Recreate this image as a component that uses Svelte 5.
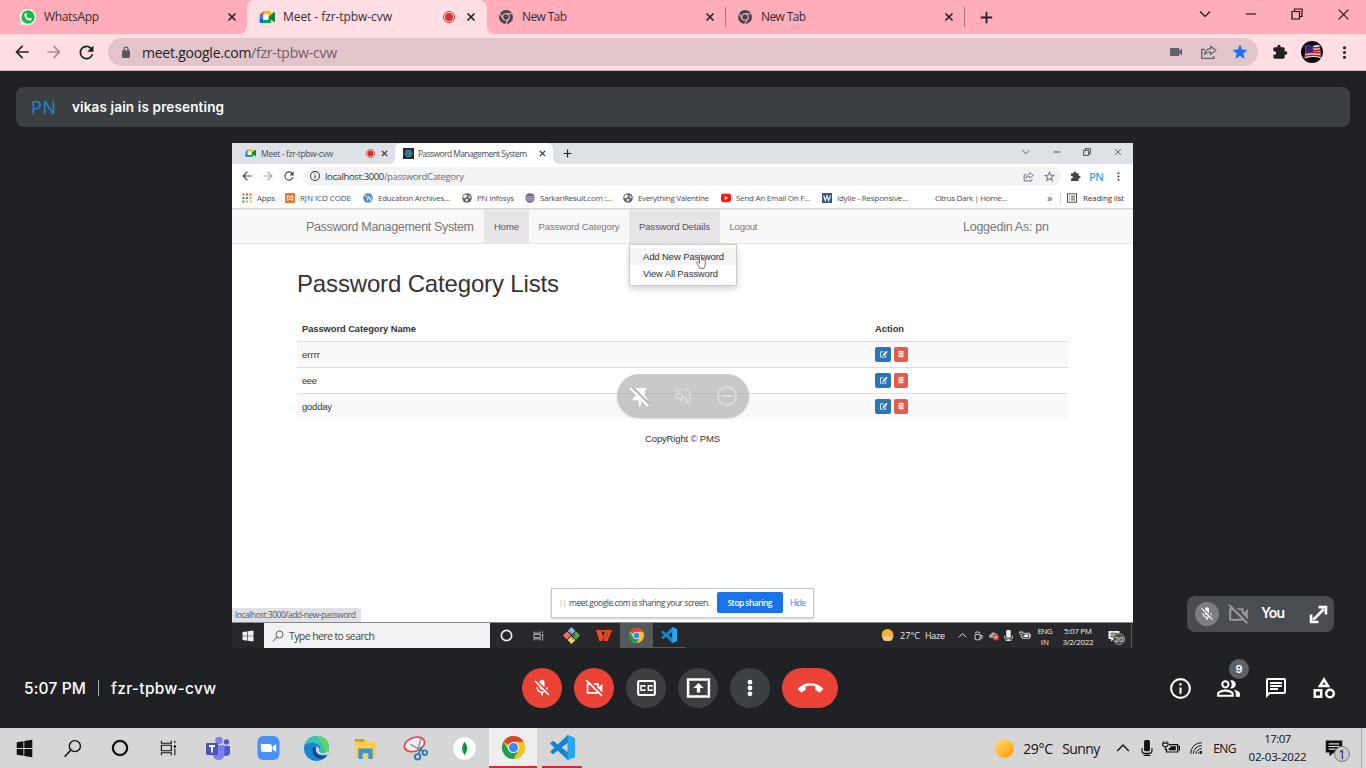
<script>
  const paths = {
    back: 'M20 11H7.83l5.59-5.59L12 4l-8 8 8 8 1.41-1.41L7.83 13H20v-2z',
    fwd: 'M12 4l-1.41 1.41L16.17 11H4v2h12.17l-5.58 5.59L12 20l8-8z',
    reload: 'M17.65 6.35A7.958 7.958 0 0012 4a8 8 0 100 16c3.73 0 6.84-2.55 7.73-6h-2.08A5.99 5.99 0 0112 18a6 6 0 110-12c1.66 0 3.14.69 4.22 1.78L13 11h7V4l-2.35 2.35z',
    star: 'M12 17.27L18.18 21l-1.64-7.03L22 9.24l-7.19-.61L12 2 9.19 8.63 2 9.24l5.46 4.73L5.82 21z',
    starOutline: 'M22 9.24l-7.19-.62L12 2 9.19 8.63 2 9.24l5.46 4.73L5.82 21 12 17.27 18.18 21l-1.63-7.03L22 9.24zM12 15.4l-3.76 2.27 1-4.28-3.32-2.88 4.38-.38L12 6.1l1.71 4.04 4.38.38-3.32 2.88 1 4.28L12 15.4z',
    lock: 'M18 8h-1V6A5 5 0 007 6v2H6a2 2 0 00-2 2v10a2 2 0 002 2h12a2 2 0 002-2V10a2 2 0 00-2-2zM9 6a3 3 0 016 0v2H9z',
    video: 'M17 10.5V7c0-.55-.45-1-1-1H4c-.55 0-1 .45-1 1v10c0 .55.45 1 1 1h12c.55 0 1-.45 1-1v-3.5l4 4v-11l-4 4z',
    puzzle: 'M20.5 11H19V7c0-1.1-.9-2-2-2h-4V3.5a2.5 2.5 0 00-5 0V5H4c-1.1 0-1.99.9-1.99 2v3.8H3.5c1.49 0 2.7 1.21 2.7 2.7s-1.21 2.7-2.7 2.7H2V20c0 1.1.9 2 2 2h13c1.1 0 2-.9 2-2v-4h1.5a2.5 2.5 0 000-5z',
    dots: 'M12 8a2 2 0 100-4 2 2 0 000 4zm0 2a2 2 0 100 4 2 2 0 000-4zm0 6a2 2 0 100 4 2 2 0 000-4z',
    bigDots: 'M12 8.300a2.600 2.600 0 100-5.200 2.600 2.600 0 000 5.200zm0 1.100a2.600 2.600 0 100 5.200 2.600 2.600 0 000-5.200zm0 6.300a2.600 2.600 0 100 5.200 2.600 2.600 0 000-5.200z',
    micOff: 'M19 11h-1.7c0 .74-.16 1.43-.43 2.05l1.23 1.23c.56-.98.9-2.09.9-3.28zm-4.02.17c0-.06.02-.11.02-.17V5c0-1.66-1.34-3-3-3S9 3.34 9 5v.18l5.98 5.99zM4.27 3L3 4.27l6.01 6.01V11c0 1.66 1.33 3 2.99 3 .22 0 .44-.03.65-.08l1.66 1.66c-.71.33-1.5.52-2.31.52-2.76 0-5.3-2.1-5.3-5.1H5c0 3.41 2.72 6.23 6 6.72V21h2v-3.28c.91-.13 1.77-.45 2.54-.9L19.73 21 21 19.73 4.27 3z',
    camOff: 'M9.56 8l-2-2-4.15-4.14L2 3.27 4.73 6H4c-.55 0-1 .45-1 1v10c0 .55.45 1 1 1h12c.21 0 .39-.08.55-.18L19.73 21l1.41-1.41-8.86-8.86L9.56 8zM5 16V8h1.73l8 8H5zm10-8v2.61l6 6V6.5l-4 4V7c0-.55-.45-1-1-1h-5.61l2 2H15z',
    callEnd: 'M12 9c-1.6 0-3.15.25-4.6.72v3.1c0 .39-.23.74-.56.9-.98.49-1.87 1.12-2.66 1.85-.18.18-.43.28-.7.28-.28 0-.53-.11-.71-.29L.29 13.08c-.18-.17-.29-.42-.29-.7 0-.28.11-.53.29-.71C3.34 8.78 7.46 7 12 7s8.66 1.78 11.71 4.67c.18.18.29.43.29.71 0 .28-.11.53-.29.71l-2.48 2.48c-.18.18-.43.29-.71.29-.27 0-.52-.11-.7-.28-.79-.74-1.69-1.36-2.67-1.85-.33-.16-.56-.5-.56-.9v-3.1C15.15 9.25 13.6 9 12 9z',
    cc: 'M19 4H5c-1.11 0-2 .9-2 2v12c0 1.1.89 2 2 2h14c1.1 0 2-.9 2-2V6c0-1.1-.9-2-2-2zm0 14H5V6h14v12zM7 15h3c.55 0 1-.45 1-1v-1H9.5v.5h-2v-3h2v.5H11v-1c0-.55-.45-1-1-1H7c-.55 0-1 .45-1 1v4c0 .55.45 1 1 1zm7 0h3c.55 0 1-.45 1-1v-1h-1.5v.5h-2v-3h2v.5H18v-1c0-.55-.45-1-1-1h-3c-.55 0-1 .45-1 1v4c0 .55.45 1 1 1z',
    info: 'M11 7h2v2h-2zm0 4h2v6h-2zm1-9a10 10 0 100 20 10 10 0 000-20zm0 18a8 8 0 110-16 8 8 0 010 16z',
    people: 'M16.67 13.13C18.04 14.06 19 15.32 19 17v3h4v-3c0-2.18-3.57-3.47-6.33-3.87z M15 12c2.21 0 4-1.79 4-4s-1.79-4-4-4c-.47 0-.91.1-1.33.24a5.98 5.98 0 010 7.52c.42.14.86.24 1.33.24z M9 12c2.21 0 4-1.79 4-4s-1.79-4-4-4-4 1.79-4 4 1.79 4 4 4zm0-6c1.1 0 2 .9 2 2s-.9 2-2 2-2-.9-2-2 .9-2 2-2z M9 13c-2.67 0-8 1.34-8 4v3h16v-3c0-2.66-5.33-4-8-4zm6 5H3v-.99C3.2 16.29 6.3 15 9 15s5.8 1.29 6 2v1z',
    chat: 'M4 4h16v12H5.17L4 17.17V4m0-2c-1.1 0-1.99.9-1.99 2L2 22l4-4h14c1.1 0 2-.9 2-2V4c0-1.1-.9-2-2-2H4zm2 10h8v2H6v-2zm0-3h12v2H6V9zm0-3h12v2H6V6z',
    volOff: 'M4.34 2.93L2.93 4.34 7.29 8.7 7 9H3v6h4l5 5v-6.59l4.18 4.18c-.65.49-1.38.88-2.18 1.11v2.06a8.94 8.94 0 003.61-1.75l2.05 2.05 1.41-1.41L4.34 2.93zM10 15.17L7.83 13H5v-2h2.83l.88-.88L10 11.41v3.76zM19 12c0 .82-.15 1.61-.41 2.34l1.53 1.53c.56-1.17.88-2.48.88-3.87 0-4.28-2.99-7.86-7-8.77v2.06c2.89.86 5 3.54 5 6.71zm-7-8l-1.88 1.88L12 7.76V4zm4.500 8A4.500 4.500 0 0014 7.970v1.790l2.480 2.480c.01-.08.02-.16.02-.24z',
    minus: 'M7 11v2h10v-2H7zm5-9a10 10 0 100 20 10 10 0 000-20zm0 18a8 8 0 110-16 8 8 0 010 16z',
    edit: 'M3 4h11l-2 2H5v12h12v-5l2-2v9H3zM20 2l3 3-9.500 9.500L9 16l1.500-4.500z',
    trash: 'M9 2h6v2h6v3H3V4h6zM5 8h14v14H5zm3 3v8h1.500v-8zm3.300 0v8h1.500v-8zm3.300 0v8h1.500v-8z'
  };

  const lineArt = {
    close: '<path d="M5 5L19 19M19 5L5 19" stroke="currentColor" stroke-width="3.300"/>',
    thinClose: '<path d="M3 3L21 21M21 3L3 21" stroke="currentColor" stroke-width="2"/>',
    plus: '<path d="M12 1.500V22.500M1.500 12H22.500" stroke="currentColor" stroke-width="3.300"/>',
    chevron: '<path d="M2 7L12 17L22 7" fill="none" stroke="currentColor" stroke-width="2.200"/>',
    up: '<path d="M2 17L12 7L22 17" fill="none" stroke="currentColor" stroke-width="2.400"/>',
    min: '<path d="M2 12H22" stroke="currentColor" stroke-width="2.200"/>',
    restore: '<path d="M2 7H17V22H2ZM7 7V2H22V17H17" fill="none" stroke="currentColor" stroke-width="2.400"/>',
    record: '<circle cx="12" cy="12" r="11" fill="none" stroke="#d93025" stroke-width="2"/><circle cx="12" cy="12" r="7.800" fill="#d93025"/>',
    whatsapp: '<path d="M12 0a12 12 0 11-5.500 22.700L0 24l1.500-6A12 12 0 0112 0z" fill="#fff"/><circle cx="12" cy="12" r="10" fill="#19b84c"/><path d="M8 6.500c1-.8 1.500-.2 2.500 2.500l-1 1.500c.8 2 2.200 3.200 4.200 4l1.300-1.500c1 .3 2.400 1 2.700 1.500.2 2-1.600 3-3.200 2.900C10.500 17 6.500 12.500 6.500 9c0-1 .6-2 1.500-2.500z" fill="#fff"/>',
    meet: '<path d="M1 9L7 3V9Z" fill="#ea4335"/><path d="M7 3H16Q18 3 18 5V10H14V8H7Z" fill="#fbbc04"/><path d="M1 9H6V16H1Z" fill="#2684fc"/><path d="M1 15H6V21H3Q1 21 1 19Z" fill="#0066da"/><path d="M6 16H14V12H18V19Q18 21 16 21H6Z" fill="#00ac47"/><path d="M14 12L22 5Q24 3.500 24 6V18Q24 20.500 22 19Z" fill="#188038"/><path d="M7 8H14V16H6V9Z" fill="#fff"/>',
    greyChrome: '<circle cx="12" cy="12" r="12" fill="#45484b"/><circle cx="12" cy="12" r="5.600" fill="none" stroke="#ffadbb" stroke-width="1.900"/><path d="M12 6.400H23M7 15L1.500 6M16.800 15L11.500 24" stroke="#ffadbb" stroke-width="1.900"/>',
    share: '<path d="M7 8H2.500V21.500H19.500V18" fill="none" stroke="currentColor" stroke-width="1.900"/><path d="M15 3.500L22.500 9.500L15 15.500V12C11 12 8.500 13 6.500 16C7 11 10 7.500 15 7Z" fill="none" stroke="currentColor" stroke-width="1.700"/>',
    avatar: '<circle cx="12" cy="12" r="12" fill="#08080f"/><path d="M5 4L12 5.500L20 4L22 19Q14 16 4 19Z" fill="#f5e9ea"/><path d="M12 7Q16 8 21 6.500M12 10Q17 11 22 9.500M4 13.500Q12 11.500 22 13M4 16.500Q12 14.500 22 16.500" fill="none" stroke="#b81d2d" stroke-width="1.800"/><path d="M5 4L13 5.500V12L4.500 12.500Z" fill="#272a80"/>',
    windows: '<path d="M1 4L10.500 2.800V11.400H1ZM11.700 2.600L23 1V11.400H11.700ZM1 12.600H10.500V21.300L1 20ZM11.700 12.600H23V23L11.700 21.500Z" fill="currentColor"/>',
    search: '<circle cx="15" cy="9" r="7" fill="none" stroke="currentColor" stroke-width="1.700"/><path d="M10 14L2 22.500" stroke="currentColor" stroke-width="1.900"/>',
    circle: '<circle cx="12" cy="12" r="9.500" fill="none" stroke="currentColor" stroke-width="3"/>',
    taskview: '<path d="M2 1V5H16V1M2 23V19H16V23M2 8H16V16H2Z" fill="none" stroke="currentColor" stroke-width="1.600"/><path d="M21 1V5M21 13V23" stroke="currentColor" stroke-width="1.500"/><path d="M19.500 8H22.500V11.500H19.500Z" fill="currentColor"/>',
    teams: '<circle cx="13" cy="4.500" r="3.800" fill="#7b83eb"/><circle cx="20.500" cy="6" r="2.700" fill="#5059c9"/><path d="M17 10H24V17Q23.500 20 20 20H17Z" fill="#5059c9"/><path d="M7 9H18.500V18Q18 24 12.500 24Q8 24 7 19Z" fill="#7b83eb"/><rect x="0" y="7" width="12" height="12" rx="1" fill="#4b53bc"/><path d="M3 10H9M6 10V16.500" stroke="#fff" stroke-width="1.800"/>',
    zoom: '<rect x=".5" y="0" width="23" height="24" rx="6" fill="#4a90fb"/><path d="M4 8H13Q15.500 8 15.500 10V16H6.500Q4 16 4 13.500Z" fill="#fff"/><path d="M16.300 10.500L20 8V16L16.300 13.500Z" fill="#fff"/>',
    edge: '<circle cx="12" cy="12" r="12" fill="#1684d4"/><path d="M1 8Q4 0 12 0Q23 0 24 11Q24 17 18 17Q14 17 14.500 14Q17 11 13 8Q8 5 1 8Z" fill="#35c5b8"/><path d="M12 0Q23 0 24 11Q24 16 20 17Q20 7 12 0Z" fill="#63d65a"/><path d="M8 12Q8 22 18 22Q21 21 22.500 18.500Q20 20 17 19Q12 18 12 12Q10 9 8 12Z" fill="#0b4a92"/><path d="M12 10Q10 15 14 17.500Q17 19 23 17.500L24 14Q20 18 15.500 16Q14 15 14.500 13.500Q15.500 11 12 10Z" fill="#d6d6d6"/>',
    folder: '<path d="M1 2H10L12 5H23V22H1Z" fill="#ffcf48"/><path d="M1 2H10L12 5H1Z" fill="#d99a10"/><path d="M4.500 12H19.500V23H15V17H9V23H4.500Z" fill="#3c94d6"/>',
    snip: '<ellipse cx="11" cy="8" rx="10" ry="6.500" transform="rotate(-20 11 8)" fill="#f5eeee" stroke="#e0474c" stroke-width="1.600"/><path d="M7 8L18 14M17 3L14 15" stroke="#8d9499" stroke-width="1.500"/><circle cx="14" cy="20" r="2.600" fill="none" stroke="#2b79b8" stroke-width="1.800"/><circle cx="21" cy="16" r="2.200" fill="none" stroke="#2b79b8" stroke-width="1.800"/><path d="M15 18L17 12L19 15" fill="none" stroke="#2b79b8" stroke-width="1.600"/>',
    mongo: '<circle cx="12" cy="12" r="11.700" fill="#fff"/><path d="M12 5Q18 12 12 18.500Q6.500 12 12 5Z" fill="#13aa52"/><path d="M12 5Q15.500 12 12 19.500Z" fill="#0a7a3a"/>',
    chrome: '<circle cx="12" cy="12" r="12" fill="#fbc116"/><path d="M12 12L1.600 6A12 12 0 0122.400 6H12Z" fill="#da4437"/><path d="M1.600 6A12 12 0 0012 24L17.200 15L12 12L6.800 15Z" fill="#1e9e58"/><circle cx="12" cy="12" r="5.900" fill="#f4f4f4"/><circle cx="12" cy="12" r="4.700" fill="#4285f4"/>',
    vscode: '<path d="M17 0L24 3V21L17 24L1.500 9.500L0 8L3 5.500L17 16.500V7.500L3 18.500L0 16L17 0Z" fill="#1685ce"/><path d="M17 0L24 3V21L17 24Z" fill="#2aa6f0"/>',
    git: '<path d="M12 0L17.500 5.500L12 11L6.500 5.500Z" fill="#8fb4e8"/><path d="M18.500 6.500L24 12L18.500 17.500L13 12Z" fill="#59a84e"/><path d="M5.500 6.500L11 12L5.500 17.500L0 12Z" fill="#f0735f"/><path d="M12 13L17.500 18.500L12 24L6.500 18.500Z" fill="#f0d568"/><path d="M9 6L14 11V18M14 11L18 12" fill="none" stroke="#4a4040" stroke-width="1.300"/>',
    wps: '<path d="M0 2H8L10 14L13 5H9V2H24L17.500 22H12L11.500 15L9 22H5Z" fill="#f04a23"/><path d="M14 4L11 16M18.500 5L14.500 18" stroke="#5a2a20" stroke-width="1"/>',
    sun: '<defs><linearGradient id="sunFill" x1="0" y1="0" x2=".8" y2="1"><stop offset="0" stop-color="#ffe36a"/><stop offset="1" stop-color="#ff9d0e"/></linearGradient></defs><circle cx="12" cy="12" r="12" fill="url(#sunFill)"/>',
    haze: '<circle cx="12" cy="11" r="11" fill="#f9b233"/><path d="M3 17Q9 9 15 14H23Q21 21 17 22H8Q4 21 3 17Z" fill="#e5bd7c"/><path d="M3 16H19M5 20H20" stroke="#f8e0b0" stroke-width="1.800"/>',
    mic: '<rect x="7" y="0" width="10" height="17" rx="2.500" fill="currentColor"/><path d="M3.500 12V16Q3.500 20 8 20H16Q20.500 20 20.500 16V12M12 20V23M6 23H18" fill="none" stroke="currentColor" stroke-width="1.900"/>',
    battery: '<path d="M9 7H21V18H6V13M21 10H23.500V15H21" fill="none" stroke="currentColor" stroke-width="1.700"/><path d="M11 9.500H18.500V15.500H9V12H11Z" fill="currentColor"/><path d="M2.500 2V5M6.500 2V5M1 5H8V8Q8 10 4.500 10Q1 10 1 8ZM4.500 10V15" fill="none" stroke="currentColor" stroke-width="1.500"/>',
    wifi: '<path d="M3 22A18 18 0 0122 3M7.500 22A14 14 0 0122 8M12 22A10 10 0 0122 13M16 22A6 6 0 0122 17.500" fill="none" stroke="currentColor" stroke-width="1.700"/><circle cx="20.500" cy="20.500" r="1.900" fill="currentColor"/>',
    note: '<path d="M1 2H23V18H12L6 23V18H1Z" fill="currentColor"/><path d="M5 6.500H19M5 10H19M5 13.500H14" stroke="var(--bar)" stroke-width="1.600"/>',
    present: '<path d="M2 3.500H22V20.500H2Z" fill="none" stroke="currentColor" stroke-width="2.400"/><path d="M12 7L17 12H13.600V16.500H10.400V12H7Z" fill="currentColor"/>',
    expand: '<path d="M6 18L18 6M12 3.500H20.500V12M3.500 12V20.500H12" fill="none" stroke="currentColor" stroke-width="3"/>',
    pinOff: '<path d="M7 3H19V5.500H17.500V11L20 14V16H13.500V20L12.300 23L11 20V16H5V14L8 11V5.500H7Z" fill="currentColor"/><path d="M4.500 2L22.500 20" stroke="#b5b6b8" stroke-width="2.200"/><path d="M2.500 3.500L21 22" stroke="currentColor" stroke-width="2.200"/>',
    shapes: '<path d="M12 3.500L16 10H8Z" fill="none" stroke="currentColor" stroke-width="2.500"/><path d="M2.800 14.200H9.200V20.800H2.800Z" fill="none" stroke="currentColor" stroke-width="2.500"/><circle cx="18" cy="17.500" r="3.800" fill="none" stroke="currentColor" stroke-width="2.500"/>',
    react: '<rect width="24" height="24" fill="#20262f"/><g fill="none" stroke="#4c98b4" stroke-width="1.700"><ellipse cx="12" cy="12" rx="9" ry="3.700"/><ellipse cx="12" cy="12" rx="9" ry="3.700" transform="rotate(60 12 12)"/><ellipse cx="12" cy="12" rx="9" ry="3.700" transform="rotate(120 12 12)"/></g><circle cx="12" cy="12" r="2" fill="#4c98b4"/>',
    apps: '<path d="M1 1h5v5H1zM9.500 1h5v5h-5zM18 1h5v5h-5z" fill="#e2564a"/><path d="M1 9.500h5v5H1z" fill="#3e9e58"/><path d="M9.500 9.500h5v5h-5z" fill="#4285f4"/><path d="M18 9.500h5v5h-5z" fill="#e8a33d"/><path d="M1 18h5v5H1z" fill="#3e9e58"/><path d="M9.500 18h5v5h-5zM18 18h5v5h-5z" fill="#eab23d"/>',
    xampp: '<rect width="24" height="24" rx="3" fill="#e8792b"/><path d="M7 6Q12 14 17 6Q21 12 17 18Q12 10 7 18Q3 12 7 6Z" fill="none" stroke="#fff" stroke-width="2.200"/>',
    wordpress: '<circle cx="12" cy="12" r="11.500" fill="#2b7cab"/><circle cx="12" cy="12" r="9.800" fill="none" stroke="#e8f2f7"/><path d="M4 7H8L11 18L13 9M10 7H14L17 18L20 9" fill="none" stroke="#fff" stroke-width="2"/>',
    globe: '<circle cx="12" cy="12" r="11.500" fill="#5f6368"/><path d="M5 4Q12 3 13 7Q10 8 11 11Q7 14 2 11ZM16 5L21 9Q21 13 17 13Q15 9 16 5ZM9 14Q16 14 15 17Q13 21 9 21Z" fill="#e8e8e8"/>',
    eclipse: '<circle cx="12" cy="12" r="11.500" fill="#75628f"/><path d="M1 9H23M1 13H23M3 17H21" stroke="#e3dbea" stroke-width="1.500"/>',
    youtube: '<rect x="0" y="2" width="24" height="20" rx="5" fill="#f61c0d"/><path d="M9 7L17 12L9 17Z" fill="#fff"/>',
    wix: '<rect width="24" height="24" fill="#385780"/><path d="M4 6L8 18L12 7L16 18L20 6" fill="none" stroke="#fff" stroke-width="2.600"/>',
    list: '<rect x="1" y="2" width="22" height="20" fill="none" stroke="currentColor" stroke-width="2"/><path d="M5 7.500H7M9.500 7.500H19M5 12H7M9.500 12H19M5 16.500H7M9.500 16.500H19" stroke="currentColor" stroke-width="2"/>',
    device: '<path d="M5 8H17V20Q11 23 5 20ZM17 11H22V17H17M5 4Q11 0 17 4" fill="none" stroke="currentColor" stroke-width="2"/>',
    cloud: '<path d="M3 17Q0 10 6 9Q10 2 16 7Q22 8 22 14V17Z" fill="#a9acae"/><circle cx="17" cy="16" r="7" fill="#e23b34"/><path d="M14 13L20 19M20 13L14 19" stroke="#fff" stroke-width="1.800"/>',
    hand: '<path d="M9 11V3Q9 1 11 1Q13 1 13 3V9L18 10Q21 11 21 13L20 18L18 23H10L4 15Q3 13 5 12.500Q7 12.500 9 15Z" fill="#fff" stroke="#666" stroke-width="1.600"/>'
  };

  function ic(name, w = 16, h = w) {
    const body = lineArt[name] ?? `<path fill-rule="evenodd" d="${paths[name]}" fill="currentColor"/>`;
    return `<svg viewBox="0 0 24 24" width="${w}" height="${h}" preserveAspectRatio="none" aria-hidden="true">${body}</svg>`;
  }

  // Spreads a label's letters so that it takes exactly the given width.
  function fit(node, width) {
    const natural = node.getBoundingClientRect().width;
    const gaps = Math.max(1, node.textContent.length - 1);
    node.style.letterSpacing = (width - natural) / gaps + 'px';
    node.style.width = width + 'px';
  }

  const bookmarks = [
    { icon: 'apps', text: 'Apps', span: 43, w: 18 },
    { icon: 'xampp', text: 'RJN ICD CODE', span: 78, w: 51 },
    { icon: 'wordpress', text: 'Education Archives...', span: 99, w: 72 },
    { icon: 'globe', text: 'PN Infosys', span: 63, w: 37 },
    { icon: 'eclipse', text: 'SarkariResult.com :...', span: 98, w: 72 },
    { icon: 'globe', text: 'Everything Valentine', span: 98, w: 71 },
    { icon: 'youtube', text: 'Send An Email On F...', span: 101, w: 74 },
    { icon: 'wix', text: 'Idylle - Responsive...', span: 98, w: 71 },
    { icon: null, text: 'Citrus Dark | Home...', span: 128, w: 72 }
  ];
  const categories = ['errrr', 'eee', 'godday'];
  const widths = { errrr: 18, eee: 15, godday: 30 };
</script>

<div class="desktop">
  <div class="tabs">
    <div class="seg first">
      <i>{@html ic('whatsapp', 16)}</i><span class="label" use:fit={55}>WhatsApp</span><b>{@html ic('close', 12)}</b>
    </div>
    <div class="active"><div class="face">
      <i>{@html ic('meet', 16)}</i><span class="label" use:fit={109}>Meet - fzr-tpbw-cvw</span><b class="rec">{@html ic('record', 12)}</b><b>{@html ic('close', 12)}</b>
    </div></div>
    <div class="seg rest">
      <div class="tab"><i>{@html ic('greyChrome', 14)}</i><span class="label" use:fit={45}>New Tab</span><b>{@html ic('close', 12)}</b></div>
      <div class="tab"><i>{@html ic('greyChrome', 14)}</i><span class="label" use:fit={45}>New Tab</span><b>{@html ic('close', 12)}</b></div>
      <div class="new">{@html ic('plus', 13)}</div>
      <div class="controls"><i>{@html ic('chevron', 12)}</i><i>{@html ic('min', 12)}</i><i>{@html ic('restore', 12)}</i><i>{@html ic('thinClose', 13)}</i></div>
    </div>
  </div>

  <div class="toolbar">
    <i>{@html ic('back', 20)}</i><i class="faded">{@html ic('fwd', 20)}</i><i>{@html ic('reload', 21)}</i>
    <div class="omni">
      <span class="lock">{@html ic('lock', 12, 13)}</span>
      <span class="url" use:fit={195}>meet.google.com<em>/fzr-tpbw-cvw</em></span>
      <div class="actions"><i>{@html ic('video', 16)}</i><i>{@html ic('share', 17, 16)}</i><i class="blue">{@html ic('star', 18)}</i></div>
    </div>
    <i class="ext">{@html ic('puzzle', 16)}</i><i>{@html ic('avatar', 22)}</i><i>{@html ic('dots', 19)}</i>
  </div>

  <main>
    <div class="banner"><span class="pn" use:fit={25}>PN</span><strong use:fit={152}>vikas jain is presenting</strong></div>

    <section class="shared">
      <div class="s-tabs">
        <div class="s-seg"><i>{@html ic('meet', 11, 10)}</i><span use:fit={72}>Meet - fzr-tpbw-cvw</span><b>{@html ic('record', 9)}</b><b>{@html ic('close', 9)}</b></div>
        <div class="s-active"><div><i>{@html ic('react', 11)}</i><span use:fit={109}>Password Management System</span><b>{@html ic('close', 9)}</b></div></div>
        <div class="s-rest"><i>{@html ic('plus', 9)}</i><div class="s-controls"><i>{@html ic('chevron', 8)}</i><i>{@html ic('min', 8)}</i><i>{@html ic('restore', 8)}</i><i>{@html ic('thinClose', 8)}</i></div></div>
      </div>
      <div class="s-tool">
        <i>{@html ic('back', 14)}</i><i class="pale">{@html ic('fwd', 14)}</i><i>{@html ic('reload', 14)}</i>
        <div class="s-omni"><i>{@html ic('info', 12)}</i><span use:fit={139}>localhost:3000<em>/passwordCategory</em></span><div class="s-act"><i>{@html ic('share', 11)}</i><i>{@html ic('starOutline', 13)}</i></div></div>
        <i class="s-ext">{@html ic('puzzle', 11)}</i><strong use:fit={15}>PN</strong><i class="s-dots">{@html ic('dots', 13)}</i>
      </div>
      <div class="marks">
        {#each bookmarks as m}
          <div class="mark" style="width: {m.span}px"><i>{#if m.icon}{@html ic(m.icon, 10)}{/if}</i><span use:fit={m.w}>{m.text}</span></div>
        {/each}
        <span class="more">»</span><div class="reading"><i>{@html ic('list', 10)}</i><span use:fit={41}>Reading list</span></div>
      </div>

      <div class="page">
        <nav>
          <span class="brand"><span use:fit={168}>Password Management System</span></span>
          <span class="link on"><span use:fit={25}>Home</span></span>
          <span class="link"><span use:fit={81}>Password Category</span></span>
          <div class="link on drop"><span use:fit={71}>Password Details</span>
            <div class="menu"><p class="hot"><span use:fit={81}>Add New Password</span></p><p><span use:fit={75}>View All Password</span></p></div>
          </div>
          <span class="link"><span use:fit={28}>Logout</span></span>
          <span class="user" use:fit={86}>Loggedin As: pn</span>
        </nav>
        <span class="cursor">{@html ic('hand', 12, 15)}</span>
        <h1><span use:fit={262}>Password Category Lists</span></h1>
        <div class="table">
          <div class="row head"><span><span use:fit={114}>Password Category Name</span></span><span><span use:fit={29}>Action</span></span></div>
          {#each categories as c}
            <div class="row"><span><span use:fit={widths[c]}>{c}</span></span><span class="btns"><b class="edit">{@html ic('edit', 9)}</b><b class="del">{@html ic('trash', 8)}</b></span></div>
          {/each}
        </div>
        <div class="copy"><span use:fit={75}>CopyRight © PMS</span></div>
        <div class="pill"><i>{@html ic('pinOff', 23)}</i><i class="dim">{@html ic('volOff', 22)}</i><i class="dim">{@html ic('minus', 24)}</i></div>
        <div class="sharing"><span class="grip">||</span><span use:fit={141}>meet.google.com is sharing your screen.</span><b><span use:fit={45}>Stop sharing</span></b><a href="#hide" use:fit={16}>Hide</a></div>
        <div class="status"><span use:fit={121}>localhost:3000/add-new-password</span></div>
      </div>

      <div class="s-bar">
        <i>{@html ic('windows', 12)}</i>
        <div class="s-search"><i>{@html ic('search', 12)}</i><span use:fit={86}>Type here to search</span></div>
        <i>{@html ic('circle', 13)}</i><i>{@html ic('taskview', 11, 10)}</i><i>{@html ic('git', 17)}</i><i>{@html ic('wps', 16, 13)}</i><i class="lit">{@html ic('chrome', 15)}</i><i class="run">{@html ic('vscode', 16)}</i>
        <div class="s-tray">
          <i>{@html ic('haze', 13)}</i><span class="temp"><span use:fit={20}>27°C</span><span use:fit={20}>Haze</span></span>
          <i>{@html ic('up', 9)}</i><i>{@html ic('device', 10)}</i><i>{@html ic('cloud', 11)}</i><i>{@html ic('mic', 11)}</i><i>{@html ic('battery', 12, 11)}</i>
          <span class="stack"><span use:fit={15}>ENG</span><span>IN</span></span>
          <span class="stack"><span use:fit={28}>5:07 PM</span><span use:fit={31}>3/2/2022</span></span>
          <i class="s-note">{@html ic('note', 12)}<small>20</small></i>
        </div>
      </div>
    </section>

    <div class="you"><span class="mute">{@html ic('micOff', 16)}</span><span class="cam">{@html ic('camOff', 25)}</span><strong use:fit={24}>You</strong><span class="exp">{@html ic('expand', 21)}</span></div>

    <footer>
      <div class="clock"><span use:fit={62}>5:07 PM</span><hr /><span use:fit={105}>fzr-tpbw-cvw</span></div>
      <div class="calls">
        <button class="red" aria-label="Microphone">{@html ic('micOff', 20)}</button>
        <button class="red" aria-label="Camera">{@html ic('camOff', 21)}</button>
        <button aria-label="Captions">{@html ic('cc', 25, 24)}</button>
        <button aria-label="Present">{@html ic('present', 25, 24)}</button>
        <button aria-label="More">{@html ic('bigDots', 22)}</button>
        <button class="red end" aria-label="Leave">{@html ic('callEnd', 25)}</button>
      </div>
      <div class="side"><i>{@html ic('info', 25)}</i><i class="ppl">{@html ic('people', 25)}<small>9</small></i><i>{@html ic('chat', 24)}</i><i>{@html ic('shapes', 24)}</i></div>
    </footer>
  </main>

  <div class="bar">
    <i>{@html ic('windows', 17, 19)}</i><i>{@html ic('search', 19)}</i><i>{@html ic('circle', 18)}</i><i>{@html ic('taskview', 17, 16)}</i><i>{@html ic('teams', 24)}</i><i>{@html ic('zoom', 23, 24)}</i><i>{@html ic('edge', 25)}</i><i>{@html ic('folder', 23)}</i><i>{@html ic('snip', 25)}</i><i>{@html ic('mongo', 23)}</i><i class="lit">{@html ic('chrome', 23)}</i><i class="run">{@html ic('vscode', 25)}</i>
    <div class="tray">
      <i>{@html ic('sun', 19)}</i><span class="temp"><span use:fit={30}>29°C</span><span use:fit={38}>Sunny</span></span>
      <i>{@html ic('up', 14)}</i><i>{@html ic('mic', 14, 16)}</i><i>{@html ic('battery', 18, 16)}</i><i>{@html ic('wifi', 14, 14)}</i><span><span use:fit={23}>ENG</span></span>
      <span class="stack"><span use:fit={27}>17:07</span><span use:fit={58}>02-03-2022</span></span>
      <i class="note">{@html ic('note', 18)}<small>1</small></i>
    </div>
  </div>
</div>

<style>
  :global(body) { margin: 0; overflow: hidden; }
  :global(svg) { display: block; flex: none; }
  * { box-sizing: border-box; }
  i, b, em { font-style: normal; }
  i { display: flex; align-items: center; justify-content: center; flex: none; }
  span, strong, a { white-space: nowrap; flex: none; }
  span, strong { display: inline-block; }
  p, h1 { margin: 0; }
  .desktop { width: 1366px; height: 768px; display: flex; flex-direction: column; font-family: "Open Sans", "Noto Sans", sans-serif; color: #202124; }

  .tabs { display: flex; height: 34px; background: #ffdfe4; font-size: 12px; color: #3a2a2e; }
  .seg { background: #ffadbb; display: flex; align-items: center; }
  .tabs b { color: #202124; }
  .label { line-height: 34px; }
  .first { width: 247px; border-radius: 0 0 8px 0; padding: 0 9px 0 20px; }
  .first i, .face i { margin-right: 8px; }
  .first b, .tab b { margin-left: auto; }
  .active { width: 240px; background: #ffadbb; }
  .face { height: 34px; background: #ffdfe4; border-radius: 8px 8px 0 0; display: flex; align-items: center; padding: 0 10px 0 12px; }
  .face .rec { margin-left: auto; margin-right: 10px; }
  .rest { flex: 1; border-radius: 0 0 0 8px; }
  .tab { width: 239px; height: 20px; display: flex; align-items: center; padding: 0 9px 0 12px; border-right: 1px solid #a8727c; }
  .tab i { margin-right: 9px; }
  .new { margin-left: 15px; color: #202124; }
  .controls { display: flex; margin-left: auto; align-self: flex-start; height: 28px; color: #111; }
  .controls i { width: 46px; }

  .toolbar { height: 37px; background: #ffdfe4; border-bottom: 1px solid #c9b4b8; display: flex; align-items: center; padding: 0 6px; color: #202124; }
  .toolbar > i { width: 32px; }
  .toolbar .faded { color: #a88f95; }
  .omni { width: 1150px; height: 28px; margin-left: 6px; border-radius: 14px; background: #e1c5ca; display: flex; align-items: center; padding: 0 2px 0 12px; font-size: 14px; }
  .lock { color: #5f565a; margin-right: 10px; }
  .omni em { color: #6f6064; }
  .actions { display: flex; margin-left: auto; color: #5f6368; }
  .actions i { width: 32px; }
  .actions .blue { color: #1a73e8; }
  .toolbar .ext { margin-left: 6px; }

  main { position: relative; flex: 1; background: #202124; padding: 16px 16px 0; color: #fff; font-family: Inter, "Open Sans", sans-serif; }
  .banner { height: 40px; background: #3c4043; border-radius: 8px; display: flex; align-items: center; padding-left: 15px; font-size: 13.500px; }
  .banner strong { font-weight: 600; margin-left: 16px; line-height: 38px; }
  .pn { color: #168bd0; font: 500 18px/40px "Open Sans", sans-serif; }

  .shared { width: 901px; height: 505px; margin: 16px 0 0 216px; background: #fff; display: flex; flex-direction: column; overflow: hidden; font: 8.500px "Open Sans", sans-serif; color: #4a4d52; }
  .s-tabs { display: flex; height: 21px; background: #fff; }
  .s-seg { width: 163px; background: #dee1e6; border-radius: 0 0 6px 0; display: flex; align-items: center; padding: 0 6px 1px 13px; }
  .s-seg i { margin-right: 5px; }
  .s-seg b { margin-left: 5.500px; color: #333; }
  .s-seg span + b { margin-left: auto; }
  .s-active { width: 158px; background: #dee1e6; }
  .s-active div { height: 21px; background: #fff; border-radius: 6px 6px 0 0; display: flex; align-items: center; padding: 0 6px 1px 8px; }
  .s-active i { margin-right: 4px; }
  .s-active b { margin-left: auto; color: #333; }
  .s-rest { flex: 1; background: #dee1e6; border-radius: 0 0 0 6px; display: flex; align-items: center; padding-left: 10px; color: #222; }
  .s-controls { display: flex; margin-left: auto; height: 17px; align-self: flex-start; }
  .s-controls i { width: 30.500px; }
  .s-tool { height: 24px; display: flex; align-items: center; padding-left: 4px; color: #44474a; }
  .s-tool > i { width: 21px; }
  .s-tool .pale { color: #aaa; }
  .s-omni { width: 758px; height: 19px; margin-left: 4px; border-radius: 10px; background: #f1f3f4; display: flex; align-items: center; padding: 0 1px 0 6px; font-size: 9.500px; color: #333; }
  .s-omni > i { margin-right: 4px; }
  .s-omni em { color: #6b6e72; }
  .s-act { display: flex; margin-left: auto; color: #5f6368; }
  .s-act i { width: 21px; }
  .s-tool .s-ext { margin-left: 4px; }
  .s-tool strong { font-size: 11px; font-weight: 600; color: #35a5e8; margin-left: 3px; }
  .s-tool .s-dots { margin-left: 4px; }
  .marks { height: 21px; border-bottom: 1px solid #d5d6d8; display: flex; align-items: center; padding: 0 0 1px 9px; font-size: 8px; }
  .mark { display: flex; align-items: center; flex: none; }
  .mark i { width: 11px; height: 10px; margin-right: 5px; }
  .more { width: 7px; font-size: 11px; line-height: 12px; }
  .reading { display: flex; align-items: center; border-left: 1px solid #d5d6d8; height: 11px; padding-left: 6px; gap: 6px; margin-left: auto; margin-right: 9px; color: #333; }

  .page { position: relative; flex: 1; font-family: "Liberation Sans", Arial, sans-serif; }
  nav { height: 35px; background: #f8f8f8; border: 1px solid #e9e9ea; border-width: 1px 0; display: flex; align-items: center; padding-left: 74px; color: #777; font-size: 9.500px; }
  .brand { font-size: 12.500px; margin-right: 10px; line-height: 34px; }
  .link { height: 34px; line-height: 34px; padding: 0 9.500px 0 10px; }
  .link.on { background: #e7e5e8; color: #555; }
  .drop { position: relative; }
  .menu { position: absolute; left: 0; top: 34px; width: 108px; height: 42px; padding-top: 3px; background: #fff; border: 1px solid #ccc; border-radius: 0 0 2px 2px; box-shadow: 0 3px 6px rgba(0, 0, 0, .18); color: #333; }
  .menu p { height: 17.500px; line-height: 17.500px; padding-left: 13px; }
  .menu .hot { background: #f5f5f5; }
  .user { font-size: 12.500px; margin-left: auto; margin-right: 84px; line-height: 34px; }
  .cursor { position: absolute; left: 463px; top: 45px; z-index: 2; }
  h1 { margin: 25px 0 0 65px; font-size: 24px; font-weight: 400; line-height: 30px; color: #333; }
  .table { width: 771px; margin: 21px 0 0 65px; font-size: 9.500px; color: #333; }
  .row { display: grid; grid-template-columns: 573px 1fr; height: 26px; align-items: center; padding: 0 0 1px 5px; border-top: 1px solid #ddd; }
  .row:nth-child(even) { background: #f9f9f9; }
  .head { border-top: 0; height: 21px; font-weight: 700; font-size: 9.300px; padding-bottom: 4px; }
  .btns { display: flex; gap: 3px; color: #fff; }
  .edit, .del { height: 15px; border-radius: 2px; display: flex; align-items: center; justify-content: center; }
  .edit { width: 16px; background: #2b74b8; }
  .del { width: 14px; background: #e35b4c; }
  .copy { text-align: center; margin-top: 14px; font-size: 9.500px; line-height: 12px; color: #333; }
  .pill { position: absolute; left: 385px; top: 165px; width: 132px; height: 44px; border-radius: 22px; background: rgba(160, 162, 165, .58); display: flex; color: #fff; box-shadow: 0 1px 2px rgba(0, 0, 0, .12); }
  .pill i { width: 44px; }
  .pill .dim { opacity: .35; }
  .sharing { position: absolute; left: 319px; top: 379px; width: 263px; height: 30px; border: 1px solid #c5c7ca; box-shadow: 0 1px 2px rgba(0, 0, 0, .2); background: #fff; display: flex; align-items: center; padding: 0 0 2px 7px; font: 8.500px "Open Sans", sans-serif; color: #444; }
  .grip { color: #999; width: 10px; font-size: 7px; }
  .sharing b { width: 66px; height: 21px; border-radius: 2px; background: #1a73e8; color: #fff; margin: 0 7px; display: flex; align-items: center; justify-content: center; font-weight: 600; }
  .sharing a { color: #4285e8; text-decoration: none; }
  .status { position: absolute; left: 0; bottom: 0; width: 129px; height: 14px; background: #dee1e6; border-radius: 0 3px 0 0; padding-left: 3px; font: 8.500px/14px "Open Sans", sans-serif; color: #55585c; }

  .s-bar { --bar: #26282b; height: 26px; background: #26282b; display: flex; color: #eee; font-size: 9px; border-top: 1px solid #888; flex: none; }
  .s-bar > i { width: 32.600px; }
  .s-bar > i:first-child { width: 32px; }
  .s-search { width: 226px; background: #f2f2f2; color: #444; display: flex; align-items: center; padding-left: 8px; gap: 5px; font-size: 10.500px; }
  .s-bar .lit { background: #55585b; }
  .s-bar .run { border-bottom: 1px solid #33608d; }
  .s-tray { margin-left: auto; display: grid; grid-template-columns: 20px 57px 16px 15px 16px 15px 17px 24px 42px 30px; align-items: center; padding-right: 2px; border-right: 1px solid #555; margin-right: 1px; }
  .temp { display: flex; justify-content: space-between; }
  .s-tray .temp { padding: 0 9px 0 3px; font-size: 9px; }
  .stack { display: flex; flex-direction: column; align-items: center; line-height: 11px; }
  .s-tray .stack { font-size: 8px; }
  .s-note { position: relative; }
  small { position: absolute; display: flex; align-items: center; justify-content: center; border-radius: 50%; }
  .s-note small { width: 12px; height: 12px; background: #4a4c4f; font-size: 8px; right: 4px; top: 3px; border: 1px solid #888; }

  .you { position: absolute; left: 1187px; top: 525px; width: 147px; height: 36px; border-radius: 8px; background: #494c50; display: flex; align-items: center; padding-left: 8px; font-size: 14px; }
  .mute { width: 24px; height: 24px; border-radius: 50%; background: #7c7e82; display: grid; place-items: center; }
  .cam { color: #96989b; margin-left: 7px; }
  .you strong { font-weight: 600; margin-left: 10px; line-height: 34px; height: 36px; }
  .exp { margin-left: auto; margin-right: 5px; }

  footer { height: 80px; display: flex; align-items: center; padding: 0 4px 0 8px; }
  .clock { width: 498px; display: flex; align-items: center; font-size: 15.500px; font-weight: 500; }
  hr { width: 1px; height: 16px; border: 0; background: #aaa; margin: 0 12px; }
  .calls { display: flex; gap: 12px; }
  button { width: 40px; height: 40px; border: 0; padding: 0; border-radius: 20px; background: #3c4043; color: #fff; display: grid; place-items: center; }
  .red { background: #ea4335; }
  .end { width: 56px; }
  .side { display: flex; margin-left: auto; margin-right: -2px; }
  .side i { width: 48px; }
  .ppl { position: relative; }
  .ppl small { width: 20px; height: 20px; left: 25px; top: -17px; background: #5f6368; font-size: 11px; font-weight: 600; }

  .bar { --bar: #d6d6d6; height: 40px; background: #d6d6d6; display: grid; grid-template-columns: repeat(4, 48px) 52px 48px 49px 49px 50px 49px 48px 49px 1fr; font-size: 14px; color: #111; }
  .bar .lit { background: #eee; border-bottom: 2px solid #cf2a3c; }
  .bar .run { border-bottom: 2px solid #cf2a3c; margin: 0 4px 0 5px; }
  .tray { margin-left: auto; margin-right: 4px; border-right: 1px solid #aaa; display: grid; grid-template-columns: 22px 97px 22px 25px 24px 25px 33px 70px 46px; align-items: center; padding-right: 4px; }
  .tray .temp { padding: 0 12px 0 8px; }
  .tray > span { font-size: 12px; text-align: center; }
  .tray > .temp { font-size: 14px; }
  .tray > .stack { line-height: 18px; font-size: 11.500px; padding-left: 3px; }
  .note { position: relative; }
  .note small { width: 16px; height: 16px; background: #c9c9c9; border: 1px solid #777; right: 7px; top: 7px; font-size: 12px; }
</style>
